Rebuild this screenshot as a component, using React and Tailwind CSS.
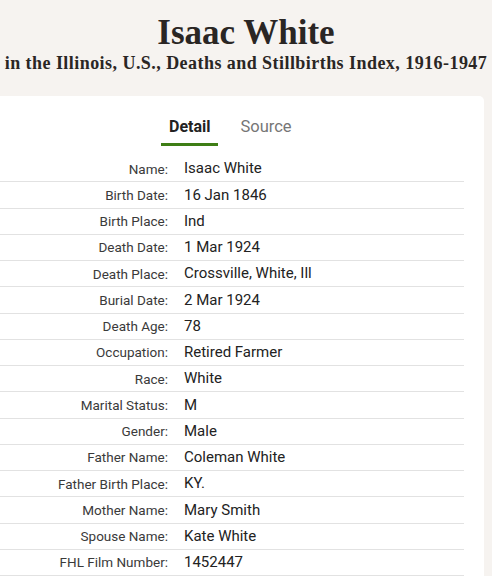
const rows = [
  ['Name', 'Isaac White'],
  ['Birth Date', '16 Jan 1846'],
  ['Birth Place', 'Ind'],
  ['Death Date', '1 Mar 1924'],
  ['Death Place', 'Crossville, White, Ill'],
  ['Burial Date', '2 Mar 1924'],
  ['Death Age', '78'],
  ['Occupation', 'Retired Farmer'],
  ['Race', 'White'],
  ['Marital Status', 'M'],
  ['Gender', 'Male'],
  ['Father Name', 'Coleman White'],
  ['Father Birth Place', 'KY.'],
  ['Mother Name', 'Mary Smith'],
  ['Spouse Name', 'Kate White'],
  ['FHL Film Number', '1452447'],
];

const App = () => {
  return (
    <div className="w-[492px] h-[576px] overflow-hidden bg-[#f6f3f0]">
      {/* Heading */}
      <div className="pt-[15px] text-center text-[#2a2624] font-['Liberation_Serif',serif]">
        <h1 className="text-[35px] leading-none font-bold">Isaac White</h1>
        <p className="mt-[4px] text-[18px] leading-none font-bold tracking-[0.45px] whitespace-nowrap">
          in the Illinois, U.S., Deaths and Stillbirths Index, 1916-1947
        </p>
      </div>

      {/* Record card */}
      <div className="mt-[24px] w-[484px] h-[600px] bg-white rounded-tr-[5px] pt-[21px] font-['Roboto',sans-serif]">
        <div className="flex pl-[161px]">
          <button className="px-[8px] pb-[6px] text-[16px] leading-[20px] font-bold text-[#222] border-b-[3px] border-[#3e7e15]">
            Detail
          </button>
          <button className="px-[8px] pb-[6px] ml-[14px] text-[16.5px] leading-[20px] text-[#767676] border-b-[3px] border-transparent">
            Source
          </button>
        </div>

        <div className="mt-[10px] w-[464px]">
          {rows.map(([label, value]) => (
            <div key={label} className="flex items-center h-[26.25px] border-b border-[#e2e2e2]">
              <span className="w-[168px] shrink-0 text-right text-[13.5px] text-[#3a3a3a] whitespace-nowrap">
                {label}:
              </span>
              <span className="ml-[16px] text-[15px] text-[#222] whitespace-nowrap">{value}</span>
            </div>
          ))}
        </div>
      </div>
    </div>
  );
};

export default App;
